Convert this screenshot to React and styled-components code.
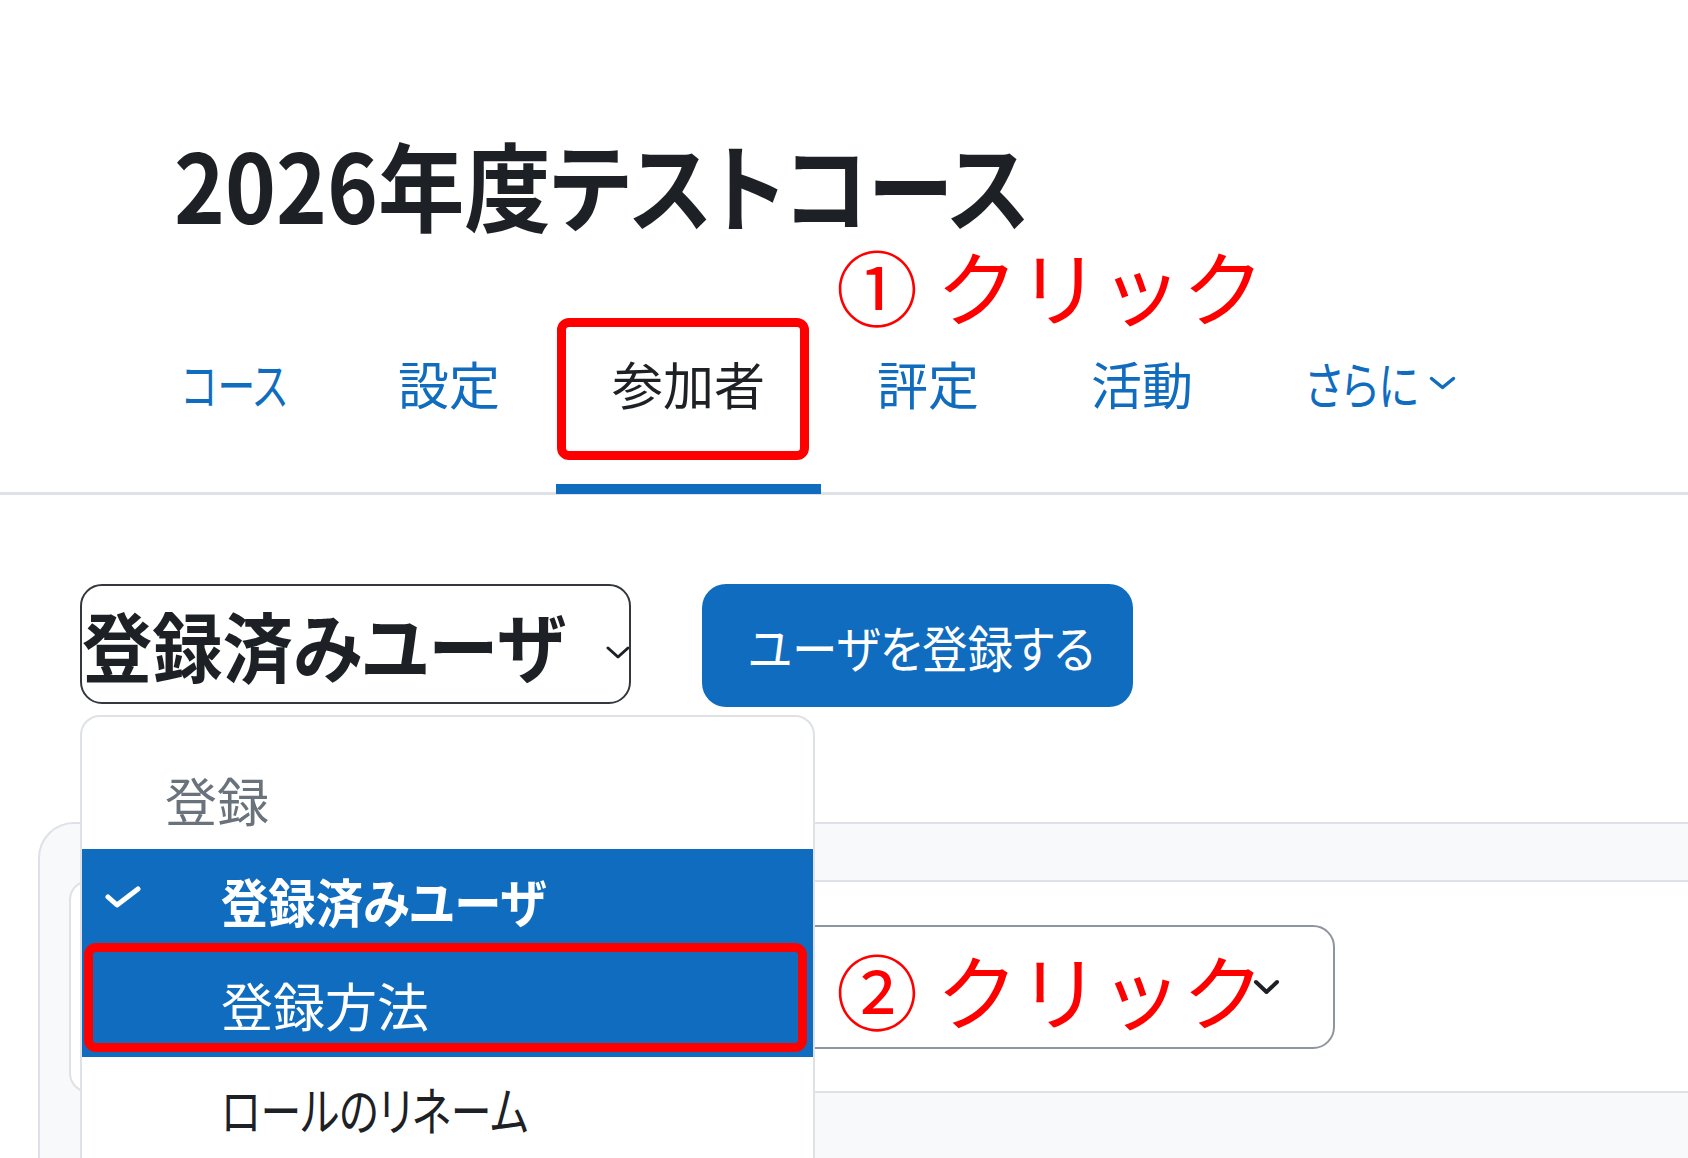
import React from "react";
import styled, { createGlobalStyle, css } from "styled-components";

const GlobalStyle = createGlobalStyle`
  body {
    margin: 0;
    background: #fff;
    font-family: "Noto Sans CJK JP", "Noto Sans", sans-serif;
  }
`;

const Page = styled.div`
  position: relative;
  width: 1688px;
  height: 1158px;
  overflow: hidden;
  color: #1d2125;
  font-feature-settings: "palt";
`;

const Squeeze = styled.span`
  display: inline-block;
  width: ${(p) => (p.$w ? `${p.$w}px` : "auto")};
  white-space: nowrap;
  transform: scaleX(${(p) => p.$sx || 1});
  transform-origin: left center;
`;

const Title = styled.h1`
  margin: 0;
  padding: 125px 0 0 174px;
  font-size: 96px;
  line-height: 115px;
  font-weight: 700;
`;

const Nav = styled.nav`
  display: flex;
  margin-top: 113px;
  padding-left: 126px;
  border-bottom: 3px solid #dee2e6;
`;

const Tab = styled.a`
  position: relative;
  display: flex;
  align-items: center;
  gap: 12px;
  padding: 0 56px 79px;
  font-size: 51px;
  line-height: 60px;
  color: #0f6cbf;
  white-space: nowrap;

  ${(p) =>
    p.$active &&
    css`
      color: #1d2125;

      &::after {
        content: "";
        position: absolute;
        left: 0;
        right: 0;
        bottom: -2px;
        height: 10px;
        background: #0f6cbf;
      }
    `}
`;

const Mark = styled.span`
  position: absolute;
  inset: ${(p) => p.$inset};
  border: 9px solid #ff0000;
  border-radius: 12px;
  z-index: 3;
  pointer-events: none;
`;

const Callout = styled.div`
  position: absolute;
  left: ${(p) => p.$x}px;
  top: ${(p) => p.$y}px;
  z-index: 4;
  font-size: 82px;
  line-height: 82px;
  color: #ff0000;
  white-space: nowrap;
  font-feature-settings: normal;
`;

const Toolbar = styled.div`
  display: flex;
  align-items: flex-start;
  gap: 71px;
  margin-top: 89px;
  padding-left: 80px;
`;

const ViewSelect = styled.div`
  width: 551px;
  height: 120px;
  box-sizing: border-box;
  border: 2px solid #34383c;
  border-radius: 22px;
  display: flex;
  align-items: center;
  justify-content: space-between;
  padding-right: 1px;
  font-size: 76px;
  font-weight: 700;
  white-space: nowrap;
  overflow: hidden;

  svg {
    flex-shrink: 0;
    margin-top: 16px;
  }
`;

const PrimaryButton = styled.button`
  width: 431px;
  height: 123px;
  border: 0;
  border-radius: 24px;
  background: #0f6cbf;
  color: #fff;
  font-family: inherit;
  font-feature-settings: inherit;
  font-size: 50px;
  text-align: left;
  padding: 0 0 0 46px;
`;

const Panel = styled.section`
  height: 420px;
  margin: 115px -40px 0 38px;
  padding: 56px 0 0 29px;
  border: 2px solid #dee2e6;
  border-radius: 36px 0 0 0;
  background: #f8f9fa;
`;

const FilterCard = styled.div`
  height: 213px;
  box-sizing: border-box;
  margin-right: -40px;
  padding: 43px 0 0 30px;
  border: 2px solid #dee2e6;
  border-radius: 20px;
  background: #fff;
`;

const FilterSelect = styled.div`
  width: 1234px;
  height: 124px;
  box-sizing: border-box;
  border: 2px solid #8f959e;
  border-radius: 22px;
  display: flex;
  align-items: center;
  justify-content: flex-end;
  padding-right: 52px;
`;

const Menu = styled.div`
  position: absolute;
  top: 715px;
  left: 80px;
  width: 735px;
  height: 480px;
  box-sizing: border-box;
  border: 2px solid #dee2e6;
  border-radius: 20px 20px 0 0;
  background: #fff;
  font-size: 52px;
  line-height: 60px;
  z-index: 2;
`;

const MenuHeader = styled.div`
  height: 132px;
  box-sizing: border-box;
  padding: 34px 0 0 83px;
  display: flex;
  align-items: center;
  color: #6a737b;
`;

const MenuItem = styled.div`
  position: relative;
  height: 104px;
  display: flex;
  align-items: center;
  padding-left: 23px;
  background: ${(p) => (p.$highlight ? "#0f6cbf" : "transparent")};
  color: ${(p) => (p.$highlight ? "#fff" : "#1d2125")};
  font-weight: ${(p) => (p.$selected ? 700 : 400)};
`;

const CheckSlot = styled.span`
  width: 116px;
  display: flex;
  align-items: center;
  margin-top: -8px;
`;

const Chevron = ({ w, h, stroke, color }) => (
  <svg width={w} height={h} viewBox={`0 0 ${w} ${h}`} fill="none">
    <polyline
      points={`${stroke},${stroke} ${w / 2},${h - stroke} ${w - stroke},${stroke}`}
      stroke={color}
      strokeWidth={stroke}
      strokeLinecap="round"
      strokeLinejoin="round"
    />
  </svg>
);

const Check = () => (
  <svg width="36" height="22" viewBox="0 0 36 22" fill="none">
    <polyline
      points="3,11 12,19 33,3"
      stroke="#fff"
      strokeWidth="5"
      strokeLinecap="round"
      strokeLinejoin="round"
    />
  </svg>
);

const tabs = [
  { label: "コース", w: 104, sx: 0.74 },
  { label: "設定" },
  { label: "参加者", active: true },
  { label: "評定" },
  { label: "活動" },
];

export default function App() {
  return (
    <>
      <GlobalStyle />
      <Page>
        <Title>
          <Squeeze $sx={0.9}>2026年度テストコース</Squeeze>
        </Title>

        <Nav>
          {tabs.map((t) => (
            <Tab key={t.label} $active={t.active}>
              <Squeeze $w={t.w} $sx={t.sx}>
                {t.label}
              </Squeeze>
              {t.active && <Mark $inset="-35px 12px 32px 1px" />}
            </Tab>
          ))}
          <Tab>
            <Squeeze $w={111} $sx={0.82}>
              さらに
            </Squeeze>
            <Chevron w={29} h={16} stroke={3.5} color="#0f6cbf" />
          </Tab>
        </Nav>

        <Toolbar>
          <ViewSelect>
            <Squeeze $sx={0.925}>登録済みユーザ</Squeeze>
            <Chevron w={26} h={15} stroke={3} color="#1d2125" />
          </ViewSelect>
          <PrimaryButton>
            <Squeeze $sx={0.91}>ユーザを登録する</Squeeze>
          </PrimaryButton>
        </Toolbar>

        <Panel>
          <FilterCard>
            <FilterSelect>
              <Chevron w={29} h={18} stroke={4} color="#1d2125" />
            </FilterSelect>
          </FilterCard>
        </Panel>

        <Menu>
          <MenuHeader>登録</MenuHeader>
          <MenuItem $highlight $selected>
            <CheckSlot>
              <Check />
            </CheckSlot>
            <Squeeze $sx={0.91}>登録済みユーザ</Squeeze>
          </MenuItem>
          <MenuItem $highlight>
            <CheckSlot />
            登録方法
            <Mark $inset="-10px 6px 5px 2px" />
          </MenuItem>
          <MenuItem>
            <CheckSlot />
            <Squeeze $sx={0.785}>ロールのリネーム</Squeeze>
          </MenuItem>
        </Menu>

        <Callout $x={836} $y={244}>
          ① クリック
        </Callout>
        <Callout $x={836} $y={948}>
          ② クリック
        </Callout>
      </Page>
    </>
  );
}
